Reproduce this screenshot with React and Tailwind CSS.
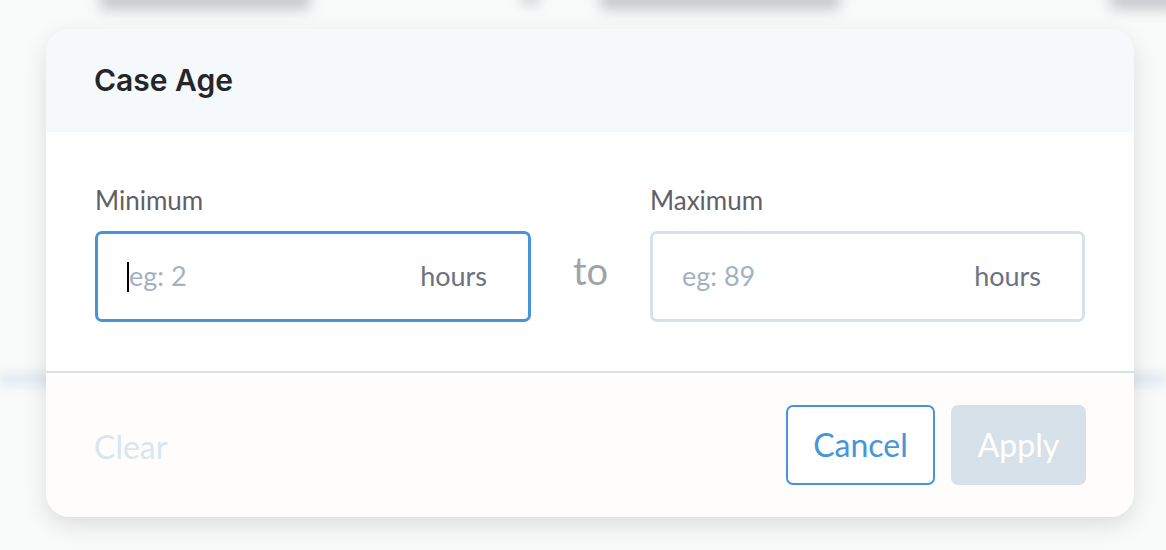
import React from "react";

export default function App() {
  const font = { fontFamily: '"Lato", "Noto Sans", sans-serif' };
  return (
    <div className="relative w-[1166px] h-[550px] overflow-hidden bg-[#f9fafa]" style={font}>
      {/* blurred background content */}
      <div className="absolute inset-0 pointer-events-none">
        <div className="absolute left-[100px] top-[-14px] w-[210px] h-[24px] rounded bg-[#a4a8ac] blur-[7px] opacity-60"></div>
        <div className="absolute left-[520px] top-[-10px] w-[20px] h-[16px] rounded bg-[#b8bcc0] blur-[6px] opacity-50"></div>
        <div className="absolute left-[600px] top-[-14px] w-[240px] h-[24px] rounded bg-[#a4a8ac] blur-[7px] opacity-60"></div>
        <div className="absolute left-[1110px] top-[-14px] w-[70px] h-[24px] rounded bg-[#a8acb0] blur-[7px] opacity-60"></div>
        <div className="absolute left-0 right-0 top-[372px] h-[14px] bg-[#dfe8f1] blur-[5px] opacity-80"></div>
      </div>

      <div className="relative pt-[29px] pl-[46px] pr-[32px]">
        <div className="rounded-[24px] overflow-hidden bg-white shadow-[0_8px_24px_rgba(0,0,0,0.12)]">
          <div className="h-[103px] bg-[#f5f9fc] flex items-center px-[48px]">
            <h2
              className="text-[30px] font-semibold text-[#24262b]"
              style={{ fontFamily: '"Inter", "Noto Sans", sans-serif' }}
            >
              Case Age
            </h2>
          </div>

          <div className="bg-white px-[49px] pt-[53px] pb-[49px] flex items-end">
            <div className="flex flex-col w-[436px]">
              <label className="text-[26px] leading-[30px] text-[#5f6166] mb-[16px]">Minimum</label>
              <div className="h-[91px] rounded-[7px] border-[3px] border-[#4894db] flex items-center pl-[29px] pr-[41px]">
                <span className="w-[2px] h-[30px] bg-black"></span>
                <span className="flex-1 text-[27px] text-[#a3b1c4]">eg: 2</span>
                <span className="text-[27px] text-[#6b7280]">hours</span>
              </div>
            </div>
            <div className="h-[91px] flex-1 flex items-center justify-center pb-[12px]">
              <span className="text-[38px] text-[#9fa3a9]">to</span>
            </div>
            <div className="flex flex-col w-[435px]">
              <label className="text-[26px] leading-[30px] text-[#5f6166] mb-[16px]">Maximum</label>
              <div className="h-[91px] rounded-[7px] border-[3px] border-[#d7e1ea] flex items-center pl-[29px] pr-[41px]">
                <span className="flex-1 text-[27px] text-[#a3b1c4]">eg: 89</span>
                <span className="text-[27px] text-[#6b7280]">hours</span>
              </div>
            </div>
          </div>

          <div className="h-[2px] bg-[#d5e0ea]"></div>

          <div className="bg-[#fefdfc] h-[144px] px-[48px] flex items-center">
            <button className="text-[32px] text-[#dbe5ef] pt-[3px]">Clear</button>
            <div className="ml-auto flex items-center gap-[16px]">
              <button className="w-[149px] h-[80px] rounded-[7px] border-2 border-[#4894db] text-[32px] text-[#4894db] bg-white">
                Cancel
              </button>
              <button className="w-[135px] h-[80px] rounded-[7px] bg-[#d7e1ea] text-[32px] text-white">
                Apply
              </button>
            </div>
          </div>
        </div>
      </div>
    </div>
  );
}
